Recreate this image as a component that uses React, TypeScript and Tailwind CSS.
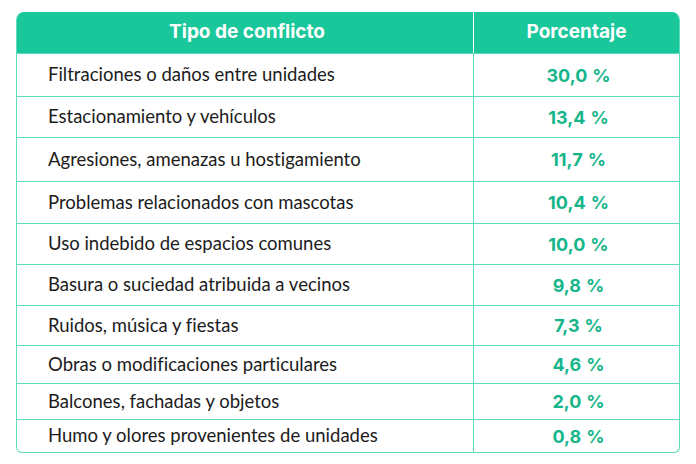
const rows = [
  { label: "Filtraciones o daños entre unidades", value: "30,0", h: "h-[43px]" },
  { label: "Estacionamiento y vehículos", value: "13,4", h: "h-[41px]" },
  { label: "Agresiones, amenazas u hostigamiento", value: "11,7", h: "h-[44px]" },
  { label: "Problemas relacionados con mascotas", value: "10,4", h: "h-[42px]" },
  { label: "Uso indebido de espacios comunes", value: "10,0", h: "h-[41px]" },
  { label: "Basura o suciedad atribuida a vecinos", value: "9,8", h: "h-[41px]" },
  { label: "Ruidos, música y fiestas", value: "7,3", h: "h-[40px]" },
  { label: "Obras o modificaciones particulares", value: "4,6", h: "h-[38px]" },
  { label: "Balcones, fachadas y objetos", value: "2,0", h: "h-[36px]" },
  { label: "Humo y olores provenientes de unidades", value: "0,8", h: "h-[33px]" },
];

export default function App() {
  return (
    <div className="h-[464px] w-[696px] bg-white pl-4 pt-3">
      <div className="w-[664px] overflow-hidden rounded-t-lg rounded-b-md border border-t-0 border-[#5fdcbc]">
        <div className="grid h-[41px] grid-cols-[457px_1fr] bg-[#19c79a] font-['Inter',sans-serif] text-[19px] font-bold text-white">
          <div className="flex items-center justify-center border-r border-white pl-1">
            Tipo de conflicto
          </div>
          <div className="flex items-center justify-center">Porcentaje</div>
        </div>
        {rows.map((row) => (
          <div
            key={row.label}
            className={`grid grid-cols-[457px_1fr] border-t border-[#5fdcbc] ${row.h}`}
          >
            <div className="flex items-center border-r border-[#5fdcbc] pl-[31px] font-['Lato',sans-serif] text-[18.5px] text-[#1c1c1c] [font-variant-ligatures:none]">
              {row.label}
            </div>
            <div className="flex items-center justify-center gap-[5px] pl-1 font-['Inter',sans-serif] text-[18px] font-bold text-[#16b58a]">
              <span>{row.value}</span>
              <span>%</span>
            </div>
          </div>
        ))}
      </div>
    </div>
  );
}
